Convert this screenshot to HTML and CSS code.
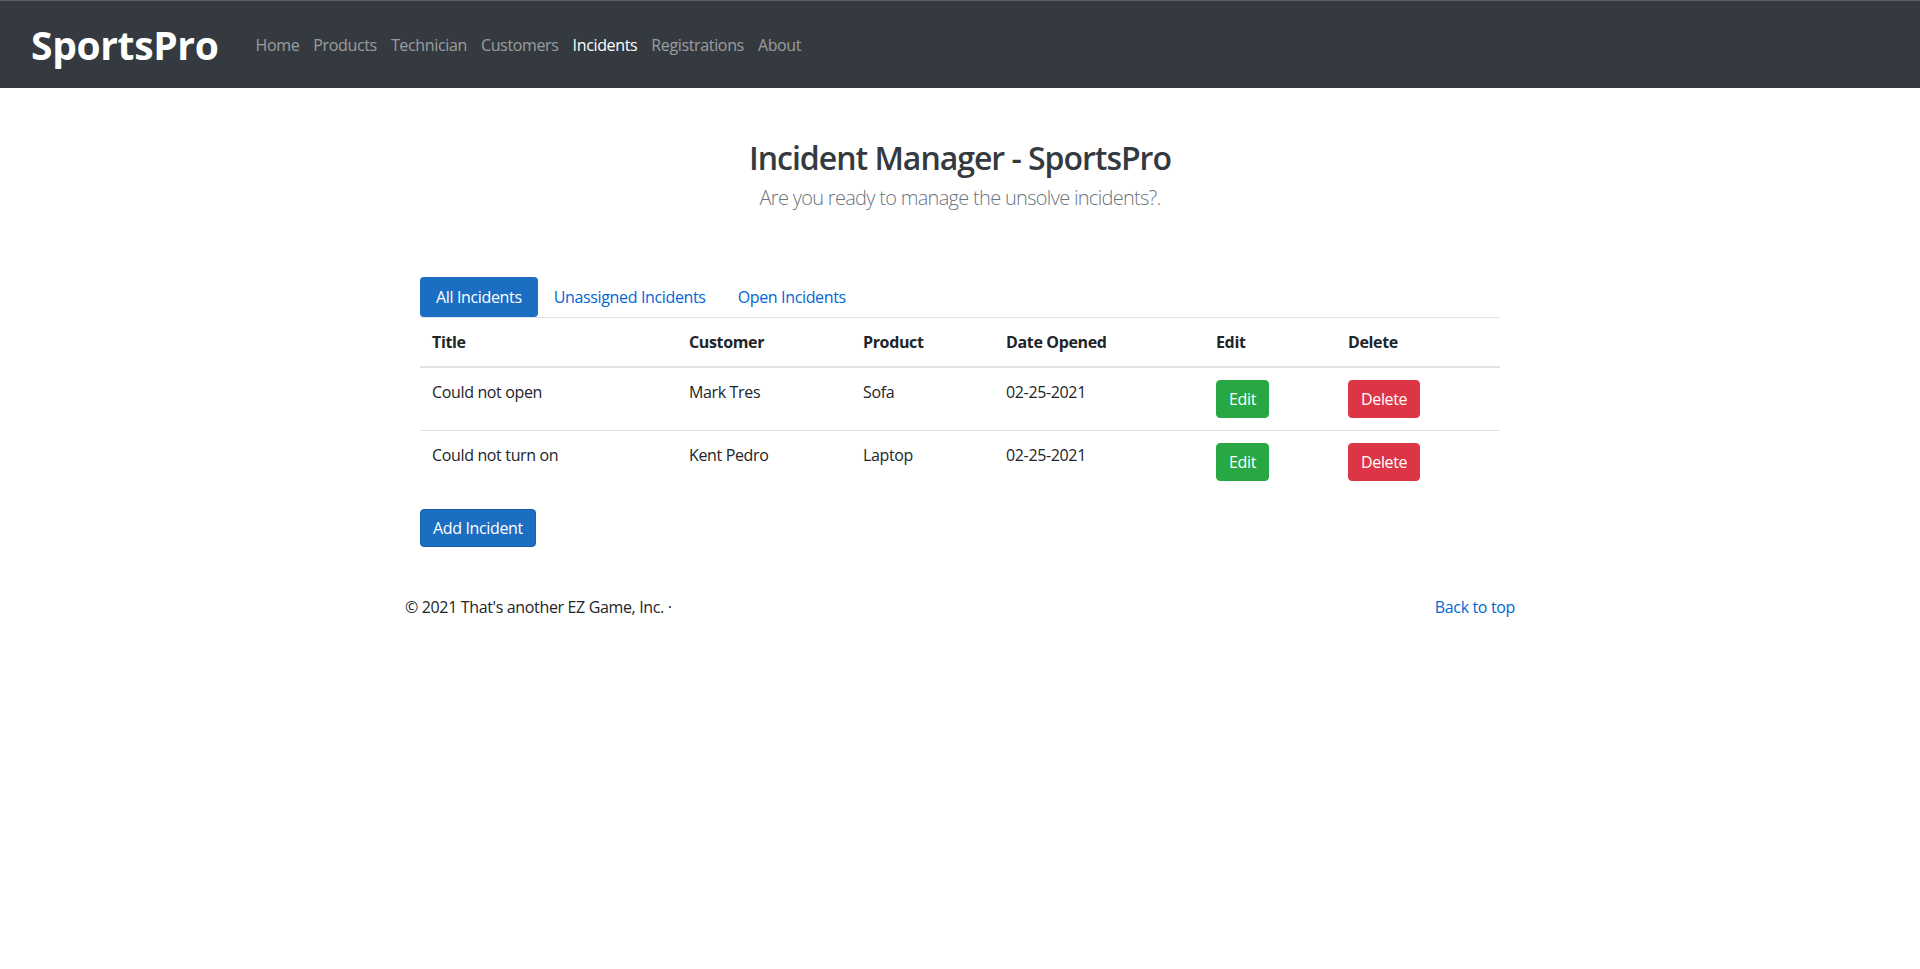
FILE: index.html
```html
<!DOCTYPE html>
<html lang="en">
<head>
<meta charset="utf-8">
<title>Incident Manager - SportsPro</title>
<link rel="stylesheet" href="styles.css">
</head>
<body>
<header class="navbar">
  <div class="navbar-inner">
    <a class="brand" href="#">SportsPro</a>
    <ul class="nav">
      <li><a class="nav-link" href="#">Home</a></li>
      <li><a class="nav-link" href="#">Products</a></li>
      <li><a class="nav-link" href="#">Technician</a></li>
      <li><a class="nav-link" href="#">Customers</a></li>
      <li><a class="nav-link active" href="#">Incidents</a></li>
      <li><a class="nav-link" href="#">Registrations</a></li>
      <li><a class="nav-link" href="#">About</a></li>
    </ul>
  </div>
</header>

<main class="container">
  <section class="intro">
    <h2 class="title">Incident Manager - SportsPro</h2>
    <p class="lead">Are you ready to manage the unsolve incidents?.</p>
  </section>

  <div class="inner">
    <ul class="pills">
      <li><a class="pill active" href="#">All Incidents</a></li>
      <li><a class="pill" href="#">Unassigned Incidents</a></li>
      <li><a class="pill" href="#">Open Incidents</a></li>
    </ul>

    <table class="table">
      <colgroup>
        <col class="c-title">
        <col class="c-customer">
        <col class="c-product">
        <col class="c-date">
        <col class="c-edit">
        <col class="c-delete">
      </colgroup>
      <thead>
        <tr>
          <th>Title</th>
          <th>Customer</th>
          <th>Product</th>
          <th>Date Opened</th>
          <th>Edit</th>
          <th>Delete</th>
        </tr>
      </thead>
      <tbody>
        <tr>
          <td>Could not open</td>
          <td>Mark Tres</td>
          <td>Sofa</td>
          <td>02-25-2021</td>
          <td><a class="btn btn-success" href="#">Edit</a></td>
          <td><a class="btn btn-danger" href="#">Delete</a></td>
        </tr>
        <tr>
          <td>Could not turn on</td>
          <td>Kent Pedro</td>
          <td>Laptop</td>
          <td>02-25-2021</td>
          <td><a class="btn btn-success" href="#">Edit</a></td>
          <td><a class="btn btn-danger" href="#">Delete</a></td>
        </tr>
      </tbody>
    </table>

    <a class="btn btn-primary" href="#">Add Incident</a>
  </div>
</main>

<footer class="container footer">
  <p>© 2021 That's another EZ Game, Inc. ·</p>
  <p><a class="link" href="#">Back to top</a></p>
</footer>
</body>
</html>
```
FILE: styles.css
```css
* { box-sizing: border-box; }

html, body {
  margin: 0;
  padding: 0;
}

body {
  font-family: "Open Sans", "Noto Sans", "Liberation Sans", sans-serif;
  font-size: 16px;
  line-height: 1.5;
  letter-spacing: -0.022em;
  color: #212529;
  background: #fff;
}

a { text-decoration: none; }

ul { list-style: none; margin: 0; padding: 0; }

/* Navbar */
.navbar {
  background: #343a40;
  border-top: 1px solid #5b6065;
  height: 88px;
  padding: 0 16px;
  display: flex;
  align-items: center;
}

.navbar-inner {
  display: flex;
  align-items: center;
  padding: 0 15px;
  width: 100%;
}

.brand {
  color: #fff;
  font-weight: 700;
  font-size: 39px;
  line-height: 60px;
  margin-right: 30px;
}

.nav {
  display: flex;
  align-items: center;
}

.nav-link {
  display: block;
  padding: 8px 7px;
  color: rgba(255, 255, 255, 0.5);
}

.nav-link.active { color: #fff; }

/* Main */
.container {
  width: 1140px;
  margin: 0 auto;
  padding: 0 15px;
}

.intro {
  text-align: center;
  padding-top: 51px;
}

.title {
  margin: 0 0 6px;
  font-size: 32px;
  font-weight: 600;
  line-height: 1.2;
  letter-spacing: -0.032em;
  color: #343a40;
}

.lead {
  margin: 0;
  font-size: 20px;
  font-weight: 300;
  letter-spacing: -0.035em;
  color: #6c757d;
}

.inner {
  padding: 64px 15px 0;
}

.pills {
  display: flex;
}

.pill {
  display: block;
  padding: 8px 16px;
  color: #0366d6;
  border-radius: 4px;
}

.pill.active {
  color: #fff;
  background: #1b6ec2;
}

/* Table */
.table {
  width: 100%;
  border-collapse: collapse;
  table-layout: fixed;
  margin-bottom: 16px;
}

.c-title { width: 257px; }
.c-customer { width: 174px; }
.c-product { width: 143px; }
.c-date { width: 210px; }
.c-edit { width: 132px; }
.c-delete { width: 164px; }

.table th,
.table td {
  padding: 12px;
  text-align: left;
  vertical-align: top;
  border-top: 1px solid #dee2e6;
}

.table thead th {
  font-weight: 700;
  border-bottom: 2px solid #dee2e6;
}

/* Buttons */
.btn {
  display: inline-block;
  vertical-align: top;
  padding: 6px 12px;
  font-size: 16px;
  line-height: 24px;
  border: 1px solid transparent;
  border-radius: 4px;
  color: #fff;
}

.btn-success { background: #28a745; border-color: #28a745; }
.btn-danger { background: #dc3545; border-color: #dc3545; }
.btn-primary { background: #1b6ec2; border-color: #1861ac; }

/* Footer */
.footer {
  margin-top: 48px;
  display: flex;
  justify-content: space-between;
}

.footer p { margin: 0 0 16px; }

.link { color: #0366d6; }
```
